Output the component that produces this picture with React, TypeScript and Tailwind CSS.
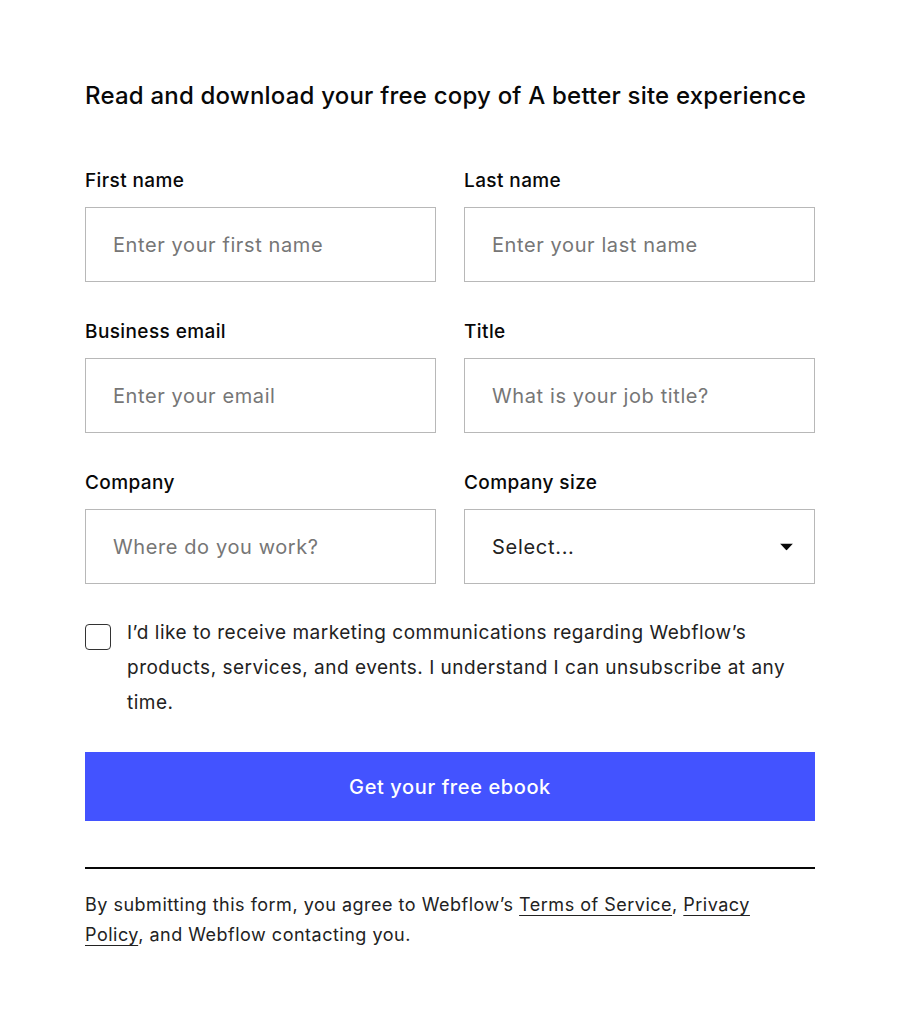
import { useState } from "react";

const fields = [
  { label: "First name", placeholder: "Enter your first name" },
  { label: "Last name", placeholder: "Enter your last name" },
  { label: "Business email", placeholder: "Enter your email" },
  { label: "Title", placeholder: "What is your job title?" },
  { label: "Company", placeholder: "Where do you work?" },
];

export default function App() {
  const [checked, setChecked] = useState(false);

  return (
    <div className="min-h-screen bg-white text-[#080808] font-['Inter','Liberation_Sans',sans-serif]">
      <div className="mx-auto w-[730px] pt-[80px]">
        <h1 className="text-[24px] leading-[32px] font-medium tracking-[0.2px]">
          Read and download your free copy of A better site experience
        </h1>

        <form className="mt-[58px]" onSubmit={(e) => e.preventDefault()}>
          <div className="grid grid-cols-2 gap-x-[28px] gap-y-[39px]">
            {fields.map((f) => (
              <label key={f.label} className="flex flex-col">
                <span className="text-[19px] leading-[22px] font-medium tracking-[0.4px]">{f.label}</span>
                <input
                  placeholder={f.placeholder}
                  className="mt-[15px] h-[75px] border border-[#b8b8b8] px-[27px] text-[20px] tracking-[0.6px] text-[#080808] placeholder:text-[#767676] outline-none"
                />
              </label>
            ))}
            <label className="flex flex-col">
              <span className="text-[19px] leading-[22px] font-medium tracking-[0.4px]">Company size</span>
              <div className="relative mt-[15px] h-[75px] border border-[#b8b8b8] flex items-center px-[27px]">
                <span className="text-[20px] tracking-[0.7px] text-[#222]">Select...</span>
                <svg
                  className="absolute right-[21px] top-1/2 -translate-y-1/2"
                  width="13"
                  height="7"
                  viewBox="0 0 13 7"
                >
                  <path d="M0 0h13L6.5 7z" fill="#080808" />
                </svg>
              </div>
            </label>
          </div>

          <div className="mt-[31px] flex items-start gap-[16px]">
            <button
              type="button"
              onClick={() => setChecked(!checked)}
              className="mt-[9px] h-[26px] w-[26px] shrink-0 rounded-[4px] border border-[#333] bg-white"
            />
            <p className="text-[19px] leading-[35px] text-[#222] tracking-[0.5px]">
              I’d like to receive marketing communications regarding Webflow’s products, services, and events. I
              understand I can unsubscribe at any time.
            </p>
          </div>

          <button
            type="submit"
            className="mt-[32px] h-[69px] w-full bg-[#4353ff] text-white text-[20px] font-medium tracking-[0.6px]"
          >
            Get your free ebook
          </button>
        </form>

        <div className="mt-[46px] h-[2px] bg-[#080808]" />

        <p className="mt-[21px] max-w-[700px] text-[18px] leading-[30px] text-[#222] tracking-[0.5px]">
          By submitting this form, you agree to Webflow’s{" "}
          <a href="#" className="underline underline-offset-[4px] decoration-[1px]">
            Terms of Service
          </a>
          ,{" "}
          <a href="#" className="underline underline-offset-[4px] decoration-[1px]">
            Privacy Policy
          </a>
          , and Webflow contacting you.
        </p>
      </div>
    </div>
  );
}
